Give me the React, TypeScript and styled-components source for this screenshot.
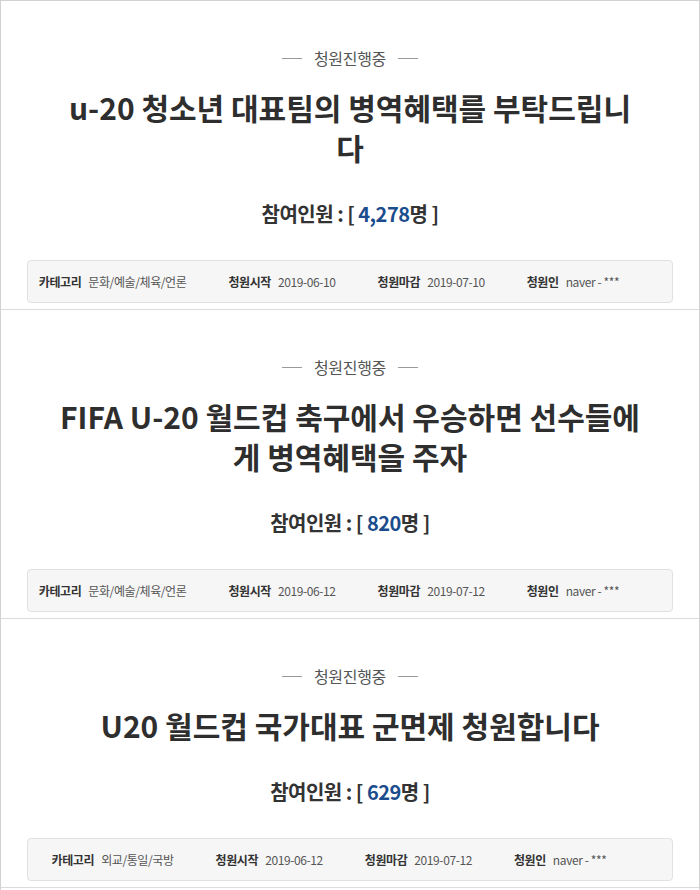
import React from "react";
import styled, { createGlobalStyle } from "styled-components";

const GlobalStyle = createGlobalStyle`
    html, body {
        margin: 0;
        padding: 0;
        background: #ffffff;
    }
    body {
        font-family: "Noto Sans CJK KR", "Noto Sans", sans-serif;
        color: #333;
    }
`;

interface Petition {
    title: string;
    count: string;
    category: string;
    start: string;
    end: string;
    author: string;
}

const petitions: Petition[] = [
    {
        title: "u-20 청소년 대표팀의 병역혜택를 부탁드립니다",
        count: "4,278",
        category: "문화/예술/체육/언론",
        start: "2019-06-10",
        end: "2019-07-10",
        author: "naver - ***"
    },
    {
        title: "FIFA U-20 월드컵 축구에서 우승하면 선수들에게 병역혜택을 주자",
        count: "820",
        category: "문화/예술/체육/언론",
        start: "2019-06-12",
        end: "2019-07-12",
        author: "naver - ***"
    },
    {
        title: "U20 월드컵 국가대표 군면제 청원합니다",
        count: "629",
        category: "외교/통일/국방",
        start: "2019-06-12",
        end: "2019-07-12",
        author: "naver - ***"
    }
];

const Page = styled.div`
    width: 700px;
    height: 890px;
    box-sizing: border-box;
    border: 1px solid #d2d2d2;
    border-bottom: none;
    overflow: hidden;
`;

const Card = styled.section`
    padding: 46px 26px 6px;
    border-bottom: 1px solid #dcdcdc;
    display: flex;
    flex-direction: column;
    align-items: center;
`;

const Status = styled.div`
    display: flex;
    align-items: center;
    gap: 12px;
    font-size: 16px;
    line-height: 22px;
    color: #555;
    letter-spacing: -0.3px;

    &::before,
    &::after {
        content: "";
        width: 20px;
        height: 1px;
        background: #9a9a9a;
    }
`;

const Title = styled.h2`
    width: 588px;
    margin: 18px 0 0;
    font-size: 30px;
    line-height: 40px;
    font-weight: 700;
    color: #2e2e2e;
    text-align: center;
    word-break: break-all;
`;

const Count = styled.div`
    margin-top: 32px;
    font-size: 20px;
    line-height: 30px;
    font-weight: 700;
    color: #333;
    letter-spacing: -0.5px;
`;

const CountNumber = styled.span`
    color: #1b4d8e;
`;

const InfoBox = styled.div`
    align-self: stretch;
    margin-top: 31px;
    height: 43px;
    box-sizing: border-box;
    background: #f6f6f6;
    border: 1px solid #e1e1e1;
    border-radius: 4px;
    display: flex;
    justify-content: center;
    align-items: center;
`;

const InfoItem = styled.div`
    display: flex;
    align-items: baseline;
    gap: 7px;
    margin-right: 42px;
    font-size: 12px;
    letter-spacing: -0.4px;
    white-space: nowrap;
`;

const InfoLabel = styled.span`
    font-weight: 700;
    color: #333;
`;

const InfoValue = styled.span`
    color: #555;
`;

const PetitionCard: React.FC<{ petition: Petition }> = ({ petition }) => (
    <Card>
        <Status>청원진행중</Status>
        <Title>{petition.title}</Title>
        <Count>
            참여인원 : [ <CountNumber>{petition.count}</CountNumber>명 ]
        </Count>
        <InfoBox>
            <InfoItem>
                <InfoLabel>카테고리</InfoLabel>
                <InfoValue>{petition.category}</InfoValue>
            </InfoItem>
            <InfoItem>
                <InfoLabel>청원시작</InfoLabel>
                <InfoValue>{petition.start}</InfoValue>
            </InfoItem>
            <InfoItem>
                <InfoLabel>청원마감</InfoLabel>
                <InfoValue>{petition.end}</InfoValue>
            </InfoItem>
            <InfoItem>
                <InfoLabel>청원인</InfoLabel>
                <InfoValue>{petition.author}</InfoValue>
            </InfoItem>
        </InfoBox>
    </Card>
);

const App: React.FC = () => (
    <>
        <GlobalStyle />
        <Page>
            {petitions.map((p) => (
                <PetitionCard key={p.title} petition={p} />
            ))}
        </Page>
    </>
);

export default App;
